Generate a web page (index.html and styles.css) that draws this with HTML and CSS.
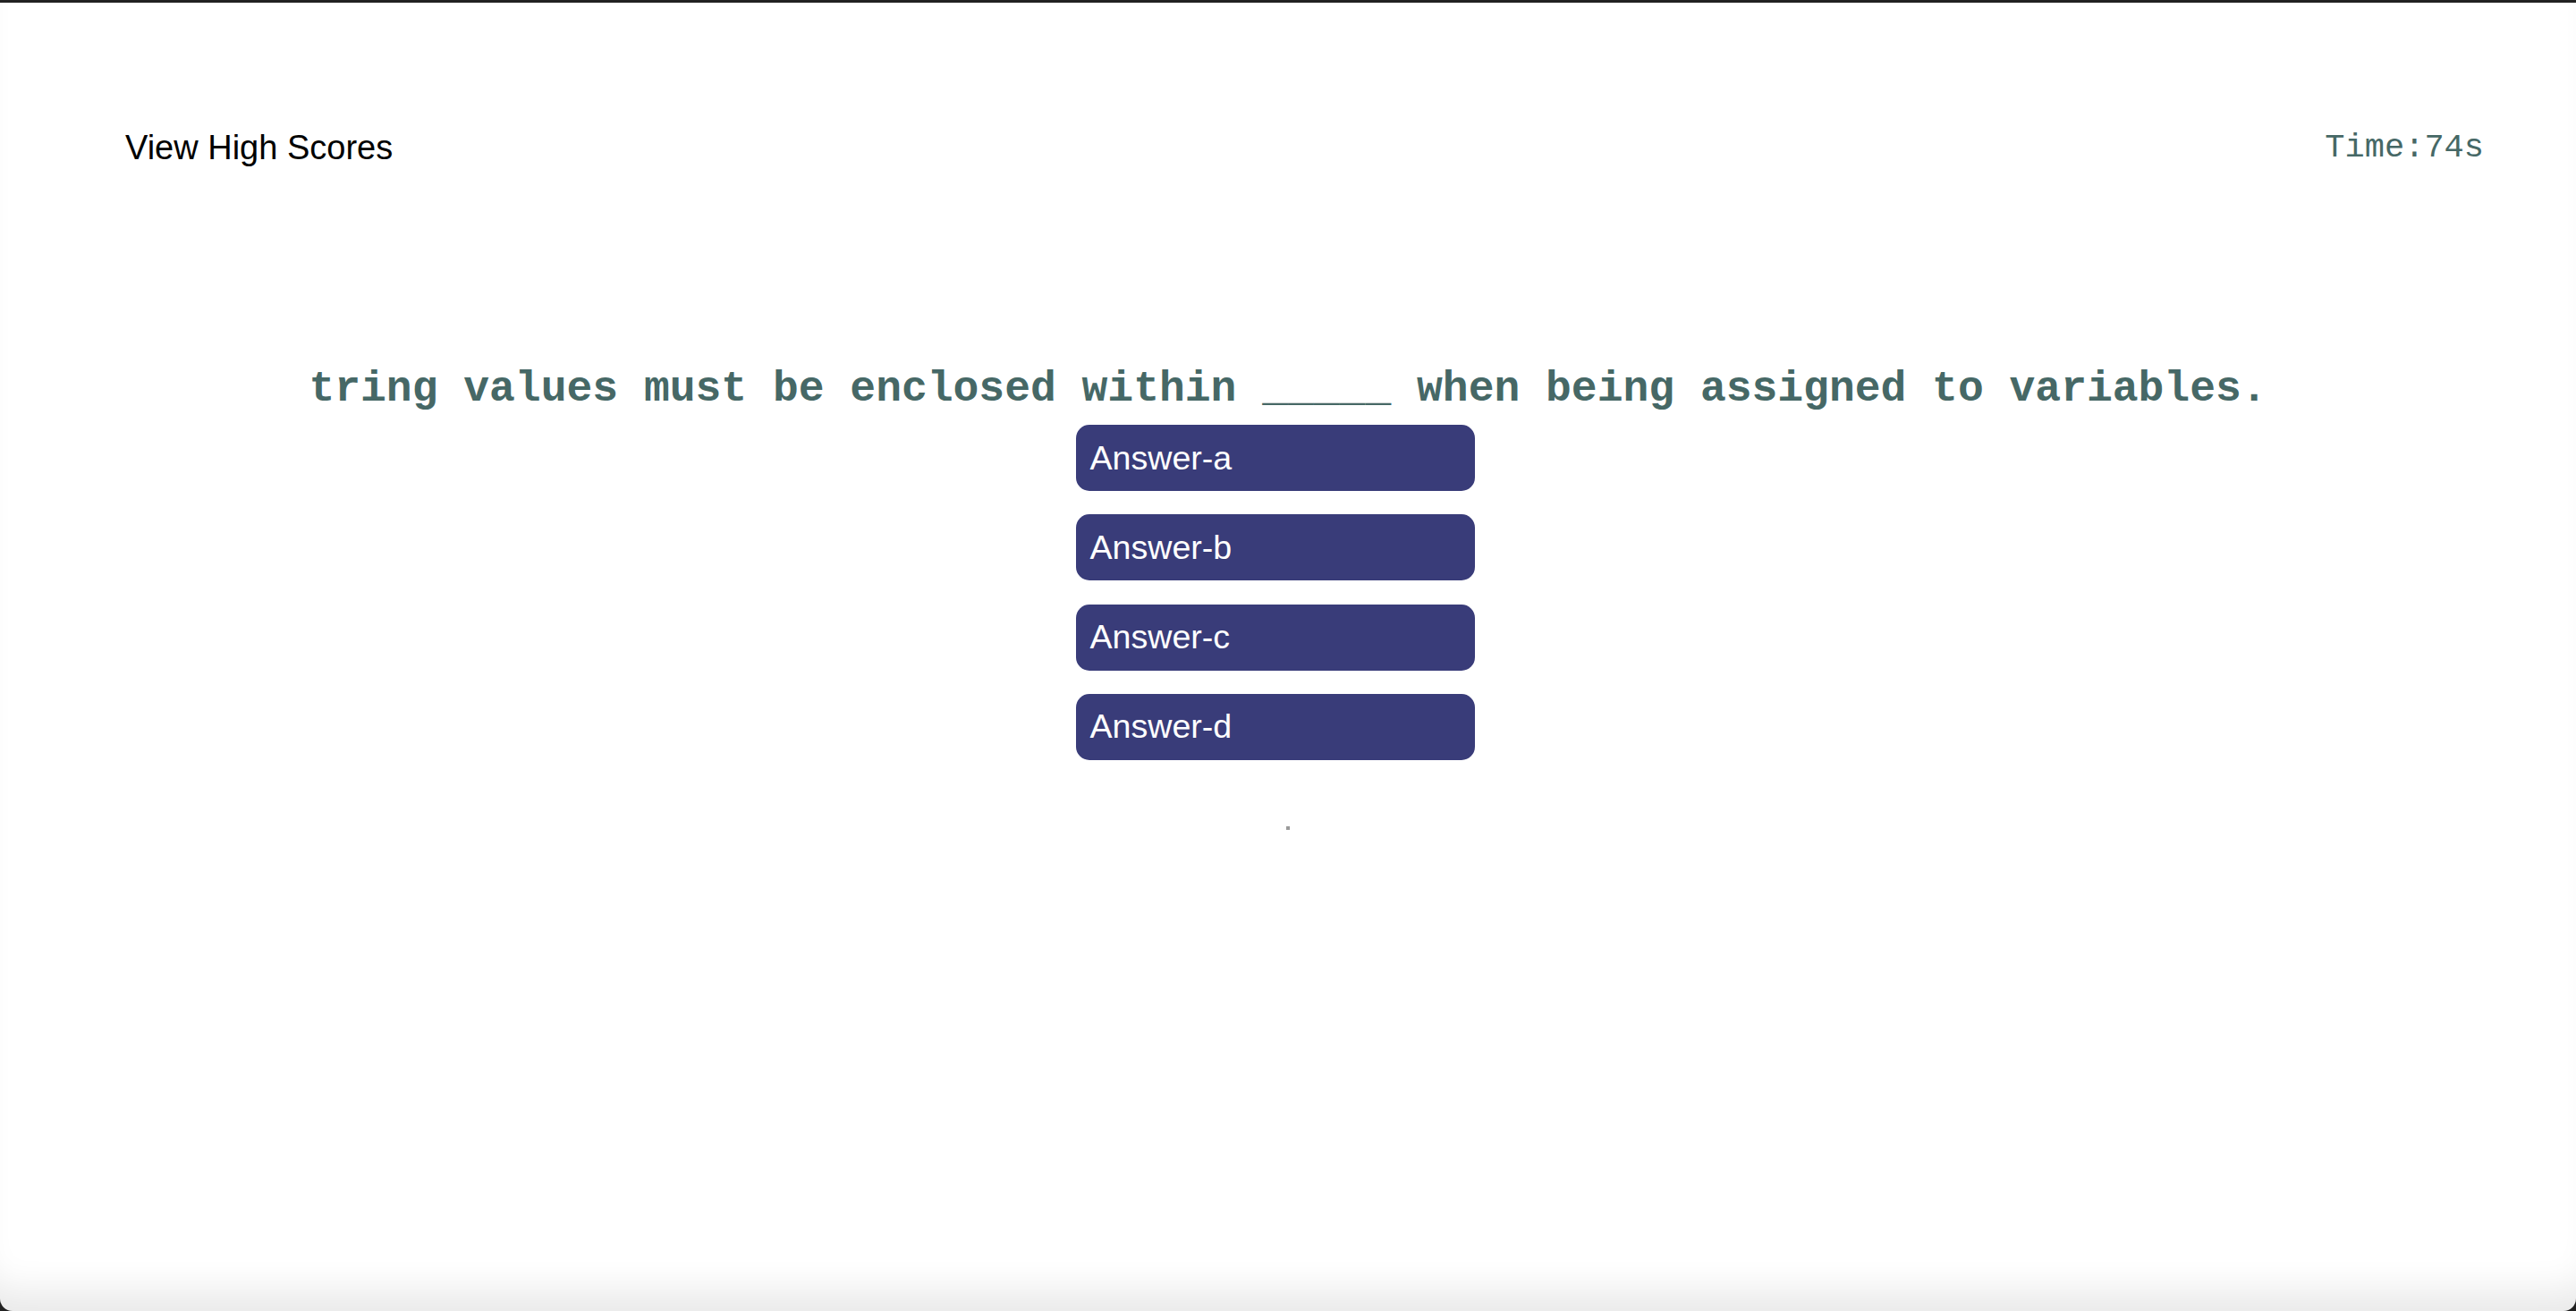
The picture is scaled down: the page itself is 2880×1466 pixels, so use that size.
FILE: index.html
```html
<!DOCTYPE html>
<html lang="en">
<head>
<meta charset="utf-8">
<title>Code Quiz</title>
<link rel="stylesheet" href="styles.css">
</head>
<body>
<div class="window">
  <header class="top-bar">
    <a class="high-scores">View High Scores</a>
    <div class="timer">Time:74s</div>
  </header>
  <main class="quiz">
    <h1 class="question">tring values must be enclosed within _____ when being assigned to variables.</h1>
    <div class="answers">
      <button class="answer">Answer-a</button>
      <button class="answer">Answer-b</button>
      <button class="answer">Answer-c</button>
      <button class="answer">Answer-d</button>
    </div>
    <div class="result-dot"></div>
  </main>
</div>
</body>
</html>
```

FILE: styles.css
```css
html {
  background: #222222;
  margin: 0;
  height: 1466px;
  overflow: hidden;
}

body {
  margin: 0;
  padding-top: 3px;
}

.window {
  height: 1463px;
  box-sizing: border-box;
  background: #ffffff;
  border-radius: 0 0 14px 14px;
  box-shadow: inset 0 -46px 40px -24px rgba(0, 0, 0, 0.09);
  padding-top: 140px;
}

.top-bar {
  display: flex;
  justify-content: space-between;
  align-items: center;
  height: 44px;
  padding: 0 103px 0 140px;
}

.high-scores {
  font-family: "Liberation Sans", Arial, sans-serif;
  font-size: 38px;
  color: #000000;
}

.timer {
  font-family: "Liberation Mono", "Courier New", monospace;
  font-size: 37px;
  color: #466866;
}

.quiz {
  display: flex;
  flex-direction: column;
  align-items: center;
}

.question {
  margin: 224px 0 16px;
  font-family: "Liberation Mono", "Courier New", monospace;
  font-weight: bold;
  font-size: 48px;
  line-height: 48px;
  color: #466866;
  text-align: center;
  white-space: nowrap;
}

.answers {
  display: flex;
  flex-direction: column;
  gap: 26.3px;
  align-self: stretch;
  align-items: center;
  padding-right: 29px;
}

.answer {
  width: 446px;
  height: 74px;
  border: none;
  border-radius: 15px;
  background: #393c79;
  color: #ffffff;
  font-family: "Liberation Sans", Arial, sans-serif;
  font-size: 37.6px;
  text-align: left;
  padding: 0 16px;
}

.result-dot {
  width: 4px;
  height: 4px;
  margin-top: 74px;
  background: #9a9a9a;
}
```
